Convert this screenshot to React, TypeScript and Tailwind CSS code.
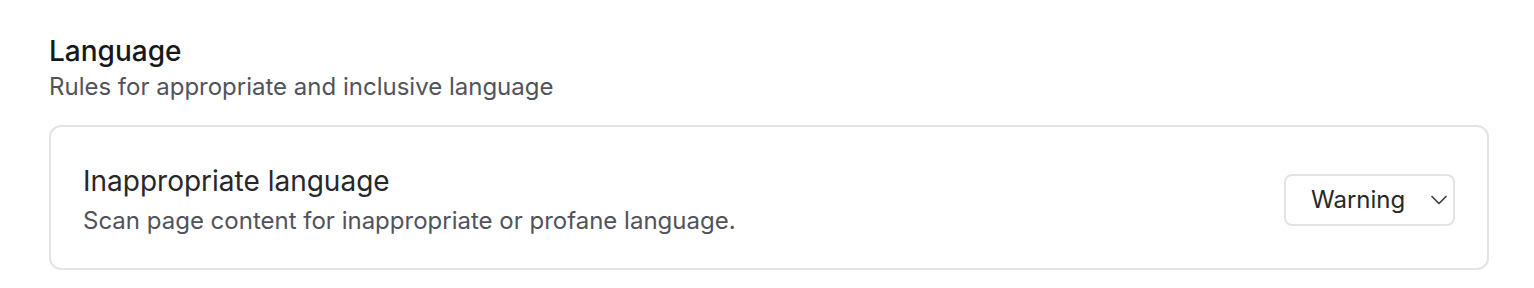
import { ChevronDown } from 'lucide-react';

function RuleRow() {
  return (
    <div className="flex items-center justify-between rounded-[12px] border-2 border-[#e4e4e7] pl-[32px] pr-[32px] pt-[36px] pb-[31px]">
      <div className="flex flex-col gap-[6px]">
        <span className="text-[28px] leading-[36px] text-[#27272a]">Inappropriate language</span>
        <span className="text-[24px] leading-[32px] text-[#52525b]">
          Scan page content for inappropriate or profane language.
        </span>
      </div>
      <button
        type="button"
        className="flex h-[52px] w-[171px] items-center justify-between rounded-[8px] border-2 border-[#e4e4e7] bg-white pl-[25px] pr-0 text-[24px] text-[#27272a]"
      >
        Warning
        <ChevronDown className="h-[28px] w-[28px] text-[#3f3f46]" strokeWidth={1.5} />
      </button>
    </div>
  );
}

export default function App() {
  return (
    <div
      className="min-h-screen bg-white pl-[49px] pr-[45px] pt-[33px]"
      style={{ fontFamily: 'Inter, "Noto Sans", sans-serif' }}
    >
      <h2 className="text-[28px] font-medium leading-[36px] text-[#18181b]">Language</h2>
      <p className="mt-[2px] text-[24px] leading-[32px] text-[#52525b]">
        Rules for appropriate and inclusive language
      </p>
      <div className="mt-[22px]">
        <RuleRow />
      </div>
    </div>
  );
}
